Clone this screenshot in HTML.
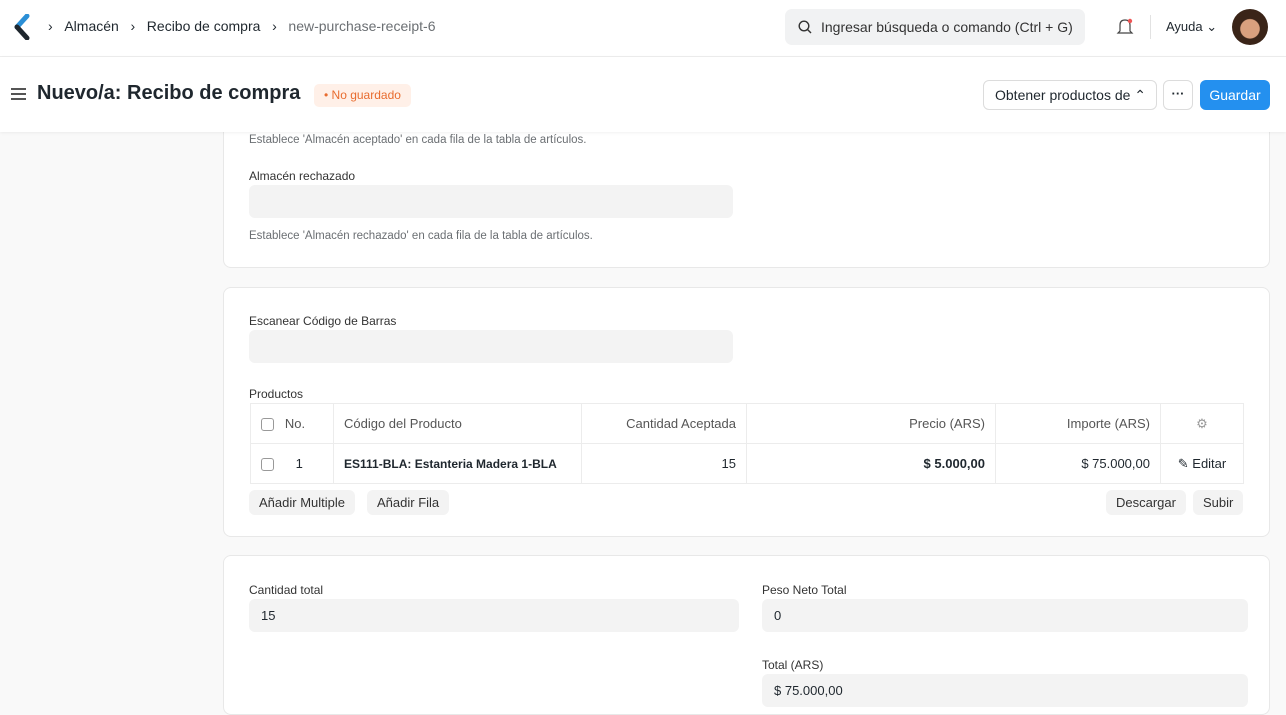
<!DOCTYPE html>
<html><head><meta charset="utf-8"><style>
*{box-sizing:border-box;margin:0;padding:0}
body{width:1286px;height:696px;overflow:hidden;background:#f9f9f9;font-family:"Liberation Sans",sans-serif;color:#1f272e;font-size:13px;position:relative}
.abs{position:absolute}
.nav{left:0;top:0;width:1286px;height:57px;background:#fff;border-bottom:1px solid #ededed}
.ph{left:0;top:57px;width:1286px;height:75px;background:#fff;box-shadow:0 1px 3px rgba(0,0,0,.06);z-index:5}
.card{left:223px;width:1047px;background:#fff;border:1px solid #e8e8e8;border-radius:8px}
.lbl{font-size:12px;color:#333}
.inp{background:#f3f3f3;border-radius:6px;height:33px}
.help{font-size:11.5px;color:#6b6f73}
.btn{background:#f3f3f3;border-radius:6px;height:25px;line-height:25px;padding:0 10px;font-size:13px;color:#333}
table{border-collapse:collapse;font-size:13px;table-layout:fixed}
td{border:1px solid #ececec;height:40px;padding:0 10px;white-space:nowrap}
</style></head><body>
<div class="abs nav">
 <svg class="abs" style="left:14px;top:14px" width="16" height="26" viewBox="0 0 16 26"><path d="M13 2 L3 13" stroke="#2b8fd6" stroke-width="5" stroke-linecap="round"/><path d="M3 13 L13 24" stroke="#1f272e" stroke-width="5" stroke-linecap="round"/></svg>
 <div class="abs" style="left:48px;top:18px;font-size:14px;color:#1f272e;white-space:nowrap">›&nbsp;&nbsp;&nbsp;Almacén&nbsp;&nbsp;&nbsp;›&nbsp;&nbsp;&nbsp;Recibo de compra&nbsp;&nbsp;&nbsp;›&nbsp;&nbsp;&nbsp;<span style="color:#6b6f73">new-purchase-receipt-6</span></div>
 <div class="abs" style="left:785px;top:9px;width:300px;height:36px;background:#f1f2f3;border-radius:7px"></div>
 <svg class="abs" style="left:798px;top:20px" width="14" height="14" viewBox="0 0 14 14"><circle cx="6" cy="6" r="4.8" fill="none" stroke="#333" stroke-width="1.4"/><path d="M9.5 9.5 L13 13" stroke="#333" stroke-width="1.4"/></svg>
 <div class="abs" style="left:821px;top:19px;font-size:14px;color:#333">Ingresar búsqueda o comando (Ctrl + G)</div>
 <svg class="abs" style="left:1116px;top:17px" width="18" height="20" viewBox="0 0 18 20"><path d="M4 14 L4 8 Q4 3 9 3 Q14 3 14 8 L14 14 L16 16 L2 16 Z" fill="none" stroke="#444" stroke-width="1.2"/><circle cx="14" cy="4" r="2.2" fill="#e55"/></svg>
 <div class="abs" style="left:1150px;top:15px;width:1px;height:24px;background:#e2e2e2"></div>
 <div class="abs" style="left:1166px;top:19px;font-size:13px">Ayuda ⌄</div>
 <div class="abs" style="left:1232px;top:9px;width:36px;height:36px;border-radius:50%;background:radial-gradient(circle at 50% 55%,#d9a07e 0 35%,#3a2418 38%)"></div>
</div>
<div class="abs ph">
 <div class="abs" style="left:11px;top:31px;width:15px;height:2px;background:#555;box-shadow:0 5px 0 #555,0 10px 0 #555"></div>
 <div class="abs" style="left:37px;top:25px;font-size:20px;font-weight:bold;white-space:nowrap">Nuevo/a: Recibo de compra</div>
 <div class="abs" style="left:314px;top:27px;height:23px;line-height:23px;padding:0 10px;background:#fff0e8;border-radius:5px;color:#e86c2f;font-size:12px">• No guardado</div>
 <div class="abs" style="left:983px;top:23px;width:174px;height:30px;border:1px solid #dcdcdc;border-radius:6px;line-height:28px;padding-left:11px;font-size:14px">Obtener productos de ⌃</div>
 <div class="abs" style="left:1163px;top:23px;width:30px;height:30px;border:1px solid #dcdcdc;border-radius:6px;text-align:center;line-height:26px;font-weight:bold">···</div>
 <div class="abs" style="left:1200px;top:23px;width:70px;height:30px;background:#2490ef;border-radius:6px;color:#fff;text-align:center;line-height:30px;font-size:14px">Guardar</div>
</div>
<div class="abs card" style="top:100px;height:168px">
 <div class="abs help" style="left:25px;top:33px">Establece 'Almacén aceptado' en cada fila de la tabla de artículos.</div>
 <div class="abs lbl" style="left:25px;top:68px">Almacén rechazado</div>
 <div class="abs inp" style="left:25px;top:84px;width:484px"></div>
 <div class="abs help" style="left:25px;top:129px">Establece 'Almacén rechazado' en cada fila de la tabla de artículos.</div>
</div>
<div class="abs card" style="top:287px;height:250px">
 <div class="abs lbl" style="left:25px;top:26px">Escanear Código de Barras</div>
 <div class="abs inp" style="left:25px;top:42px;width:484px"></div>
 <div class="abs lbl" style="left:25px;top:99px">Productos</div>
 <table class="abs" style="left:26px;top:115px;width:994px">
  <tr style="color:#555"><td style="width:83px"><span style="display:inline-block;width:13px;height:13px;border:1px solid #999;border-radius:3px;vertical-align:middle"></span>&nbsp;&nbsp;&nbsp;No.</td><td style="width:248px">Código del Producto</td><td style="width:165px;text-align:right">Cantidad Aceptada</td><td style="width:249px;text-align:right">Precio (ARS)</td><td style="width:165px;text-align:right">Importe (ARS)</td><td style="text-align:center;color:#999">⚙</td></tr>
  <tr><td><span style="display:inline-block;width:13px;height:13px;border:1px solid #999;border-radius:3px;vertical-align:middle"></span>&nbsp;&nbsp;&nbsp;&nbsp;&nbsp;&nbsp;1</td><td style="font-weight:bold;font-size:12px">ES111-BLA: Estanteria Madera 1-BLA</td><td style="text-align:right">15</td><td style="text-align:right;font-weight:bold">$ 5.000,00</td><td style="text-align:right">$ 75.000,00</td><td style="text-align:center">✎ Editar</td></tr>
 </table>
 <div class="abs btn" style="left:25px;top:202px">Añadir Multiple</div>
 <div class="abs btn" style="left:143px;top:202px">Añadir Fila</div>
 <div class="abs btn" style="left:882px;top:202px">Descargar</div>
 <div class="abs btn" style="left:969px;top:202px">Subir</div>
</div>
<div class="abs card" style="top:555px;height:160px">
 <div class="abs lbl" style="left:25px;top:27px">Cantidad total</div>
 <div class="abs inp" style="left:25px;top:43px;width:490px;line-height:33px;padding-left:12px;font-size:13px">15</div>
 <div class="abs lbl" style="left:538px;top:27px">Peso Neto Total</div>
 <div class="abs inp" style="left:538px;top:43px;width:486px;line-height:33px;padding-left:12px">0</div>
 <div class="abs lbl" style="left:538px;top:102px">Total (ARS)</div>
 <div class="abs inp" style="left:538px;top:118px;width:486px;line-height:33px;padding-left:12px">$ 75.000,00</div>
</div>
</body></html>
